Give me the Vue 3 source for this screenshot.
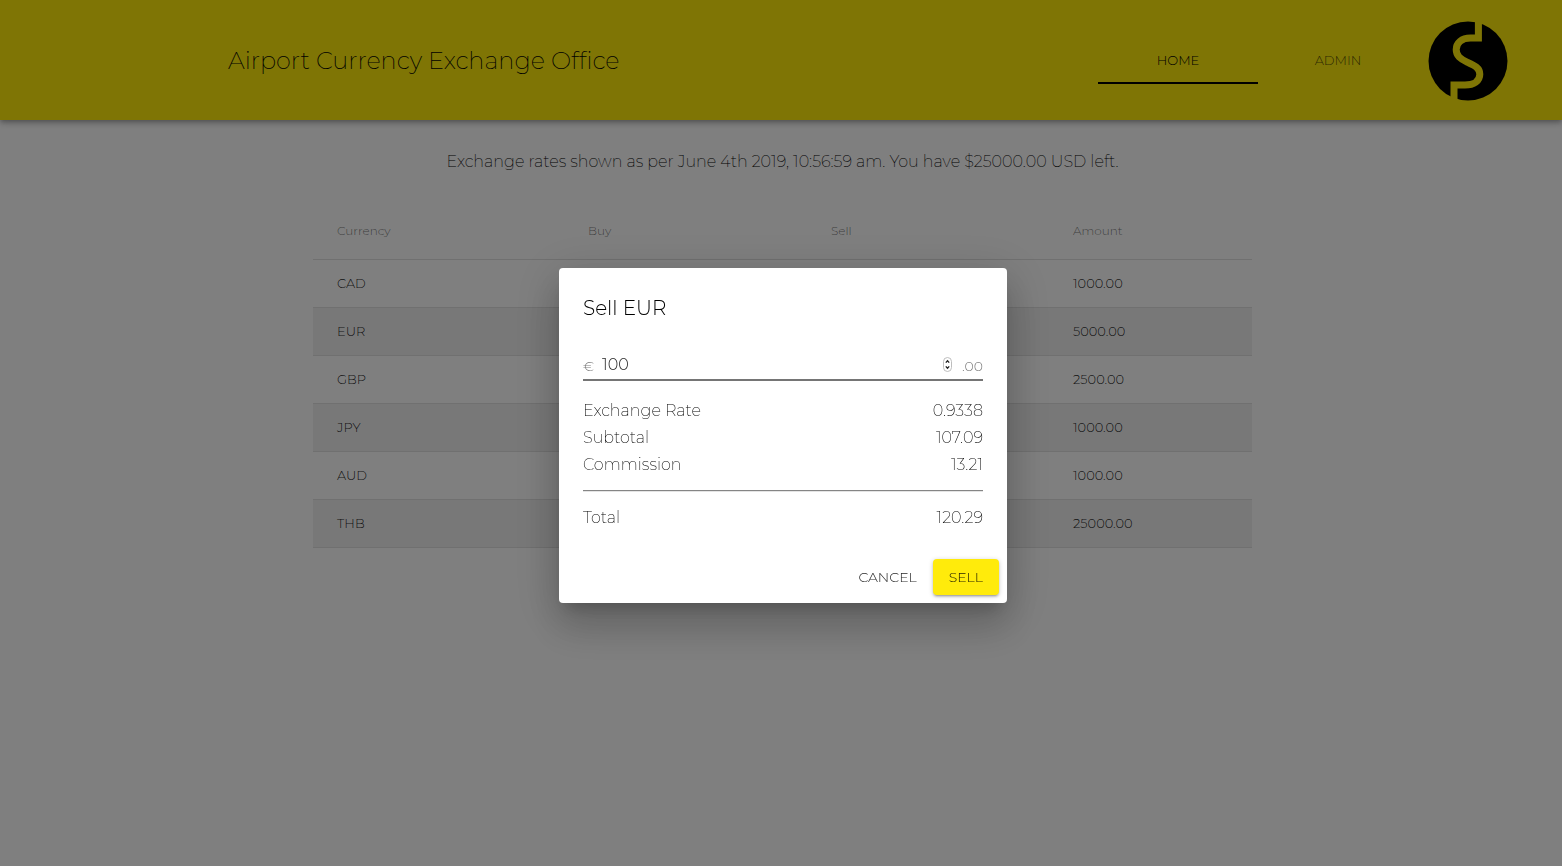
<script setup>
import { ref } from 'vue'

const amount = ref(100)
const columns = ['Currency', 'Buy', 'Sell', 'Amount']
const currencies = [
  { code: 'CAD', amount: '1000.00' },
  { code: 'EUR', amount: '5000.00' },
  { code: 'GBP', amount: '2500.00' },
  { code: 'JPY', amount: '1000.00' },
  { code: 'AUD', amount: '1000.00' },
  { code: 'THB', amount: '25000.00' },
]
const summary = [
  { label: 'Exchange Rate', value: '0.9338' },
  { label: 'Subtotal', value: '107.09' },
  { label: 'Commission', value: '13.21' },
]
</script>

<template>
  <div class="page">
    <header class="bar">
      <h1 class="title">Airport Currency Exchange Office</h1>
      <nav class="tabs">
        <a href="#home" class="tab active">HOME</a>
        <a href="#admin" class="tab">ADMIN</a>
      </nav>
      <svg class="logo" viewBox="0 0 100 100" aria-hidden="true">
        <circle cx="50" cy="51" r="39.5" fill="#000" />
        <path
          class="logo-line"
          d="M60.4 8V28H52.5C43.5 28 38.2 33 38.2 39.5C38.2 46 42.5 49 49.5 52.3C57 55.8 61.8 58 61.8 64.2C61.8 71 56 75 47 75H36V94"
        />
      </svg>
    </header>

    <main class="content">
      <p class="status">
        Exchange rates shown as per June 4th 2019, 10:56:59 am. You have $25000.00 USD left.
      </p>
      <table class="rates">
        <thead>
          <tr>
            <th v-for="c in columns" :key="c" scope="col" :class="c.toLowerCase()">{{ c }}</th>
          </tr>
        </thead>
        <tbody>
          <tr v-for="row in currencies" :key="row.code">
            <td>{{ row.code }}</td>
            <td></td>
            <td></td>
            <td>{{ row.amount }}</td>
          </tr>
        </tbody>
      </table>
    </main>

    <div class="overlay">
      <form class="dialog" role="dialog" aria-labelledby="dialog-title" @submit.prevent>
        <h2 id="dialog-title" class="dialog-title">Sell EUR</h2>
        <div class="body">
          <div class="field">
            <label class="affix" for="amount">€</label>
            <input id="amount" v-model="amount" class="amount-input" type="number" />
            <svg class="stepper" viewBox="0 0 9 15" aria-hidden="true">
              <rect x="0.5" y="0.5" width="8" height="14" rx="4" fill="#fff" stroke="#bdbdbd" />
              <path d="M2.8 5.6L4.5 3.7L6.2 5.6M2.8 9.4L4.5 11.3L6.2 9.4" fill="none" stroke="#222" stroke-width="1.3" />
            </svg>
            <span class="affix">.00</span>
          </div>
          <dl class="summary">
            <div v-for="s in summary" :key="s.label" class="line">
              <dt>{{ s.label }}</dt>
              <dd>{{ s.value }}</dd>
            </div>
            <div class="line total">
              <dt>Total</dt>
              <dd>120.29</dd>
            </div>
          </dl>
        </div>
        <div class="actions">
          <button type="button" class="btn">CANCEL</button>
          <button type="submit" class="btn primary">SELL</button>
        </div>
      </form>
    </div>
  </div>
</template>

<style>
body {
  margin: 0;
  background: #fff;
}
</style>

<style scoped>
.page {
  min-height: 100vh;
  font-family: Montserrat, Inter, "Open Sans", sans-serif;
  font-weight: 300;
  font-size: 16px;
  color: #000;
}
.bar {
  position: relative;
  display: flex;
  align-items: center;
  height: 120px;
  padding: 0 44px 0 228px;
  box-sizing: border-box;
  background: #ffeb0b;
  box-shadow: 0 2px 4px -1px rgba(0, 0, 0, 0.2), 0 4px 5px rgba(0, 0, 0, 0.14), 0 1px 10px rgba(0, 0, 0, 0.12);
}
.title {
  flex: 1;
  margin: 0;
  padding-top: 2px;
  font-size: 24px;
  font-weight: 200;
  line-height: 32px;
}
.tabs {
  display: flex;
}
.tab {
  width: 160px;
  height: 48px;
  box-sizing: border-box;
  border-bottom: 2px solid transparent;
  font-size: 13px;
  line-height: 48px;
  text-align: center;
  text-decoration: none;
  color: rgba(0, 0, 0, 0.7);
}
.tab.active {
  color: #000;
  border-color: #000;
}
.logo {
  width: 100px;
  height: 100px;
}
.logo-line {
  fill: none;
  stroke: #ffeb0b;
  stroke-width: 7;
}
.content {
  padding-left: 3px;
}
.status {
  margin: 0;
  padding: 29px 0;
  font-weight: 200;
  line-height: 26px;
  text-align: center;
}
.rates {
  width: 60%;
  min-width: 939px;
  margin: 0 auto;
  table-layout: fixed;
  border-collapse: collapse;
  text-align: left;
}
.rates th,
.rates td {
  height: 45px;
  padding: 0 24px 2px;
  border-bottom: 1px solid #e0e0e0;
  font-size: 13px;
  font-weight: 300;
  color: rgba(0, 0, 0, 0.87);
}
.rates th {
  height: 53px;
  font-size: 12px;
  color: rgba(0, 0, 0, 0.54);
}
.currency {
  width: 203px;
}
.buy {
  width: 195px;
}
.sell {
  width: 194px;
}
.rates tbody tr:nth-child(even) {
  background: #f1f1f1;
}
.overlay {
  position: fixed;
  inset: 0;
  display: flex;
  align-items: center;
  justify-content: center;
  padding: 5px 0 0 4px;
  background: rgba(0, 0, 0, 0.5);
}
.dialog {
  width: 448px;
  border-radius: 4px;
  background: #fff;
  box-shadow: 0 11px 15px -7px rgba(0, 0, 0, 0.2), 0 24px 38px 3px rgba(0, 0, 0, 0.14), 0 9px 46px 8px rgba(0, 0, 0, 0.12);
}
.dialog-title {
  margin: 0;
  padding: 24px 24px 20px;
  font-size: 20px;
  font-weight: 300;
  line-height: 32px;
}
.body {
  padding: 0 24px 20px;
}
.field {
  display: flex;
  align-items: center;
  height: 37px;
  box-sizing: border-box;
  padding-top: 6px;
  border-bottom: 2px solid #757575;
}
.affix {
  padding-top: 2px;
  font-size: 14px;
  color: rgba(0, 0, 0, 0.54);
}
.amount-input {
  flex: 1;
  min-width: 0;
  margin: 0 8px;
  padding: 0;
  border: 0;
  outline: 0;
  background: transparent;
  font: inherit;
  color: rgba(0, 0, 0, 0.87);
  appearance: textfield;
}
.amount-input::-webkit-inner-spin-button {
  display: none;
}
.stepper {
  width: 9px;
  height: 15px;
  margin-right: 10px;
}
.summary {
  margin: 16px 0 0;
  font-weight: 200;
}
.line {
  display: flex;
  justify-content: space-between;
  line-height: 27px;
}
.line dd {
  margin: 0;
}
.total {
  margin-top: 12px;
  padding-top: 13px;
  border-top: 1px solid #858585;
  box-shadow: inset 0 1px #e4e4e4;
}
.actions {
  display: flex;
  justify-content: flex-end;
  padding: 8px;
}
.btn {
  height: 36px;
  padding: 0 16px;
  border: 0;
  border-radius: 4px;
  background: transparent;
  font: inherit;
  font-size: 14px;
  color: rgba(0, 0, 0, 0.87);
}
.primary {
  background: #ffeb0b;
  box-shadow: 0 1px 5px rgba(0, 0, 0, 0.2), 0 2px 2px rgba(0, 0, 0, 0.14), 0 3px 1px -2px rgba(0, 0, 0, 0.12);
}
</style>
